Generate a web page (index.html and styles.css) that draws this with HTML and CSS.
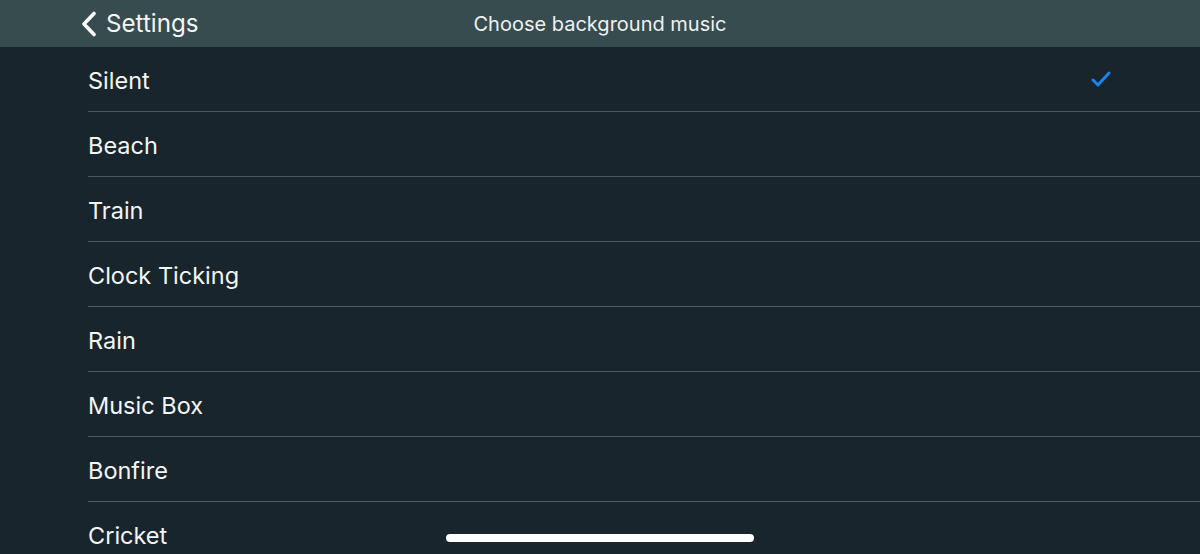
FILE: index.html
```html
<!DOCTYPE html>
<html>
<head>
<meta charset="utf-8">
<link rel="stylesheet" href="styles.css">
</head>
<body>
<header class="nav">
  <div class="back">
    <svg class="chev" width="18" height="26" viewBox="0 0 18 26"><path d="M14 2.5 L4 13 L14 23.5" fill="none" stroke="#fff" stroke-width="3.6" stroke-linecap="round" stroke-linejoin="round"/></svg>
    <span>Settings</span>
  </div>
  <div class="title">Choose background music</div>
</header>
<ul class="list">
  <li class="row"><span>Silent</span><svg class="check" width="22" height="18" viewBox="0 0 22 18"><path d="M3 10 L8 15 L19 3" fill="none" stroke="#1a84f2" stroke-width="3" stroke-linecap="round" stroke-linejoin="round"/></svg></li>
  <li class="row"><span>Beach</span></li>
  <li class="row"><span>Train</span></li>
  <li class="row"><span>Clock Ticking</span></li>
  <li class="row"><span>Rain</span></li>
  <li class="row"><span>Music Box</span></li>
  <li class="row"><span>Bonfire</span></li>
  <li class="row"><span>Cricket</span></li>
</ul>
<div class="home"></div>
</body>
</html>
```
FILE: styles.css
```css
html, body {
  margin: 0;
  padding: 0;
  height: 554px;
  overflow: hidden;
  background: #18252d;
  font-family: Inter, "Liberation Sans", sans-serif;
  color: #ffffff;
}
.nav {
  height: 47px;
  background: #374c4f;
  display: flex;
  align-items: center;
  position: relative;
}
.back {
  display: flex;
  align-items: center;
  padding-left: 80px;
  gap: 8px;
  font-size: 24.2px;
  color: #f4f6f6;
}
.chev {
  display: block;
}
.title {
  position: absolute;
  left: 0;
  right: 0;
  top: 0;
  height: 47px;
  line-height: 48px;
  text-align: center;
  font-size: 20px;
  color: #eef1f1;
  pointer-events: none;
}
.list {
  list-style: none;
  margin: 0;
  padding: 0 0 0 88px;
}
.row {
  height: 64px;
  border-bottom: 1px solid #4b5b61;
  display: flex;
  align-items: center;
  justify-content: space-between;
  font-size: 23.5px;
  color: #f4f6f6;
  padding-right: 88px;
  box-sizing: content-box;
}
.row span {
  padding-top: 2px;
}
.check {
  display: block;
}
.home {
  position: absolute;
  left: 446px;
  top: 534px;
  width: 308px;
  height: 8px;
  border-radius: 4px;
  background: #ffffff;
}
```
